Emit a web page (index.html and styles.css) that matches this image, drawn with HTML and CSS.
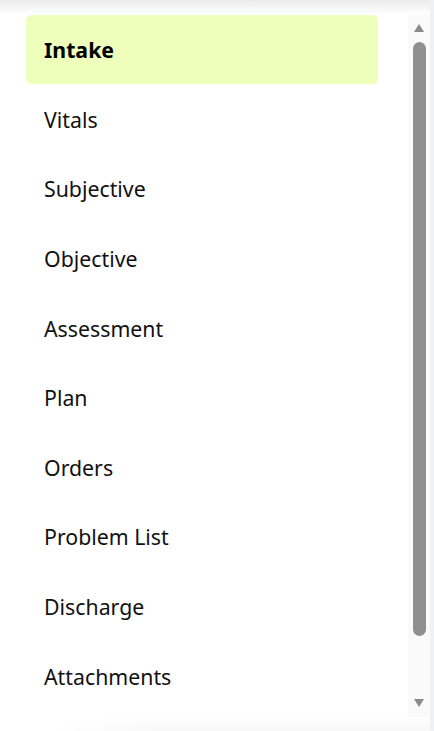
FILE: index.html
```html
<!DOCTYPE html>
<html lang="en">
<head>
<meta charset="utf-8">
<title>Sections</title>
<link rel="stylesheet" href="styles.css">
</head>
<body>
<div class="page">
  <div class="main">
    <div class="top-shade"></div>
    <div class="panel">
      <nav class="list">
        <a class="item active">Intake</a>
        <a class="item">Vitals</a>
        <a class="item">Subjective</a>
        <a class="item">Objective</a>
        <a class="item">Assessment</a>
        <a class="item">Plan</a>
        <a class="item">Orders</a>
        <a class="item">Problem List</a>
        <a class="item">Discharge</a>
        <a class="item">Attachments</a>
      </nav>
      <div class="scrollbar">
        <span class="arrow up"></span>
        <span class="thumb"></span>
        <span class="arrow down"></span>
      </div>
    </div>
    <div class="bottom-shade"></div>
  </div>
  <div class="edge"></div>
</div>
</body>
</html>
```

FILE: styles.css
```css
html, body {
  margin: 0;
  padding: 0;
  background: #ffffff;
}
body {
  width: 434px;
  height: 731px;
  overflow: hidden;
  font-family: "Noto Sans", "Open Sans", sans-serif;
  color: #111111;
}
.page {
  display: flex;
  height: 731px;
}
.main {
  flex: 1;
  display: flex;
  flex-direction: column;
  min-width: 0;
}
.edge {
  width: 4px;
  background: #eef1f5;
}
.top-shade {
  height: 15px;
  background: linear-gradient(to bottom, #ececec, #fbfbfb 80%, #ffffff);
}
.panel {
  height: 702px;
  display: flex;
}
.list {
  flex: 1;
  display: flex;
  flex-direction: column;
  padding: 0 30px 0 26px;
  overflow: hidden;
}
.item {
  display: flex;
  align-items: center;
  flex: 0 0 auto;
  height: 69.6px;
  padding-left: 18px;
  font-size: 21.3px;
  color: #111111;
  border-radius: 5px;
  box-sizing: border-box;
}
.item.active {
  height: 69px;
  margin-bottom: 0.6px;
  background: #eeffbb;
  font-weight: 700;
  color: #000000;
}
.scrollbar {
  width: 22px;
  background: #fafafa;
  display: flex;
  flex-direction: column;
  align-items: center;
}
.arrow {
  width: 0;
  height: 0;
  border-left: 5px solid transparent;
  border-right: 5px solid transparent;
}
.arrow.up {
  margin-top: 9px;
  border-bottom: 8px solid #8a8a8a;
}
.arrow.down {
  margin-top: auto;
  margin-bottom: 10px;
  border-top: 8px solid #8a8a8a;
}
.thumb {
  width: 13px;
  height: 594px;
  margin-top: 10px;
  margin-left: 1px;
  background: #8f8f8f;
  border-radius: 7px;
}
.bottom-shade {
  flex: 1;
  background: linear-gradient(to bottom, #ffffff, #f8f8f8);
  -webkit-mask-image: linear-gradient(to right, transparent 50px, #000 160px);
  mask-image: linear-gradient(to right, transparent 50px, #000 160px);
}
```
